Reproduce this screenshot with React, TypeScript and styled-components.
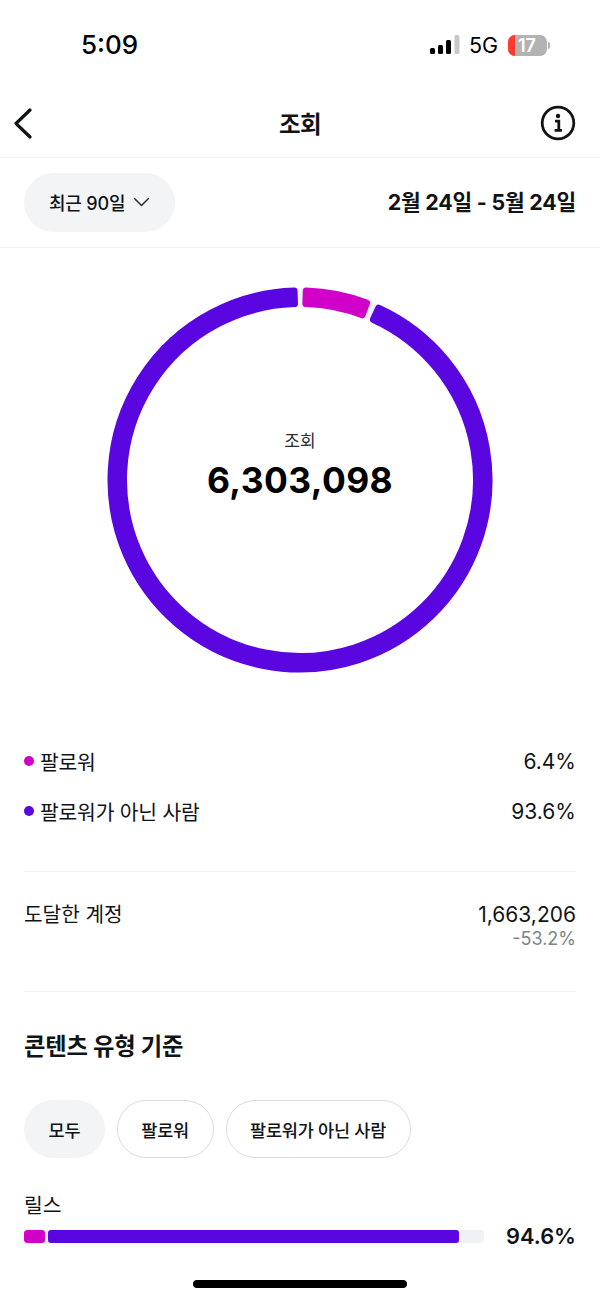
import styled, { createGlobalStyle } from "styled-components";

const PURPLE = "#5a06e0";
const MAGENTA = "#d000c8";
const SANS = `Inter, "Noto Sans CJK KR", "Liberation Sans", sans-serif`;

const GlobalStyle = createGlobalStyle`
  html, body {
    margin: 0;
    padding: 0;
    background: #ffffff;
  }
  body {
    font-family: ${SANS};
    color: #111316;
  }
`;

const Page = styled.div`
  position: relative;
  width: 600px;
  height: 1301px;
  overflow: hidden;
  background: #ffffff;
`;

// status bar
const StatusBar = styled.div`
  height: 90px;
  display: flex;
  align-items: flex-start;
  justify-content: space-between;
  padding: 29px 50px 0 81px;
  box-sizing: border-box;
`;

const Clock = styled.div`
  font-size: 26px;
  line-height: 32px;
  font-weight: 500;
  color: #000;
`;

const StatusIcons = styled.div`
  display: flex;
  align-items: center;
  gap: 9px;
  height: 32px;
`;

const Network = styled.span`
  font-size: 21.5px;
  font-weight: 400;
  color: #000;
`;

const Battery = styled.div`
  position: relative;
  width: 29px;
  height: 21px;
  margin-left: 1px;
  padding-left: 10px;
  border-radius: 7px;
  background: #b3b3b3;
  color: #fff;
  font-size: 18px;
  font-weight: 600;
  line-height: 21px;
  overflow: hidden;
  &::before {
    content: "";
    position: absolute;
    left: 0;
    top: 0;
    bottom: 0;
    width: 7px;
    background: #ff3b30;
  }
`;

const BatteryWrap = styled.div`
  display: flex;
  align-items: center;
  gap: 1px;
`;

const BatteryCap = styled.div`
  width: 2px;
  height: 7px;
  border-radius: 0 2px 2px 0;
  background: #b3b3b3;
`;

// header
const NavBar = styled.div`
  height: 68px;
  display: grid;
  grid-template-columns: 1fr auto 1fr;
  align-items: center;
  padding: 0 24px 2px 12px;
  box-sizing: border-box;
  border-bottom: 1px solid #efefef;
`;

const NavSlot = styled.div<{ $end?: boolean }>`
  display: flex;
  justify-content: ${(p) => (p.$end ? "flex-end" : "flex-start")};
`;

const NavTitle = styled.div`
  font-size: 23.5px;
  font-weight: 700;
  letter-spacing: -0.5px;
  transform: translateX(6px);
`;

const DateRow = styled.div`
  height: 90px;
  display: flex;
  align-items: center;
  justify-content: space-between;
  padding: 0 24px;
  box-sizing: border-box;
  border-bottom: 1px solid #efefef;
`;

const RangeButton = styled.div`
  height: 59px;
  display: flex;
  align-items: center;
  gap: 8px;
  padding: 0 25px;
  margin-top: -1px;
  box-sizing: border-box;
  border-radius: 30px;
  background: #f3f4f6;
  font-size: 18px;
  font-weight: 500;
  letter-spacing: -0.2px;
`;

const DateText = styled.div`
  margin-bottom: 5px;
  font-size: 21.4px;
  font-weight: 700;
  letter-spacing: -0.2px;
`;

// donut
const ChartBox = styled.div`
  position: relative;
  width: 384px;
  height: 384px;
  margin: 40px auto 0;
`;

const Ring = styled.svg`
  display: block;
  overflow: visible;
`;

const ChartCenter = styled.div`
  position: absolute;
  inset: 0;
  display: flex;
  flex-direction: column;
  align-items: center;
  justify-content: center;
`;

const ChartLabel = styled.div`
  font-size: 17px;
  line-height: 24px;
  color: #2a2c30;
`;

const ChartValue = styled.div`
  margin: 5px 0 27px;
  font-size: 35.4px;
  line-height: 46px;
  font-weight: 700;
  letter-spacing: 0.4px;
  color: #000;
`;

// legend + metrics
const Section = styled.div`
  padding: 0 24px;
`;

const Legend = styled.div`
  display: flex;
  flex-direction: column;
  gap: 20px;
  margin-top: 74px;
  padding-bottom: 45px;
  border-bottom: 1px solid #f1f1f3;
`;

const Row = styled.div`
  display: flex;
  align-items: center;
  justify-content: space-between;
  height: 30px;
  font-size: 21px;
`;

const RowLabel = styled.div`
  display: flex;
  align-items: center;
  gap: 6px;
  font-size: 20.4px;
  letter-spacing: -0.2px;
`;

const Dot = styled.span<{ color: string }>`
  width: 10px;
  height: 10px;
  border-radius: 50%;
  background: ${(p) => p.color};
`;

const Reach = styled.div`
  display: flex;
  justify-content: space-between;
  height: 120px;
  padding-top: 29px;
  box-sizing: border-box;
  border-bottom: 1px solid #f1f1f3;
  font-size: 21px;
  line-height: 28px;
`;

const ReachLabel = styled.span`
  font-size: 20.2px;
`;

const ReachValue = styled.div`
  text-align: right;
`;

const ReachDelta = styled.div`
  font-size: 18px;
  line-height: 20px;
  color: #7f838a;
`;

const Heading = styled.h2`
  margin: 37px 0 0;
  font-size: 23.3px;
  line-height: 36px;
  font-weight: 700;
  letter-spacing: -0.2px;
`;

const Chips = styled.div`
  display: flex;
  gap: 12px;
  margin-top: 35px;
`;

const Chip = styled.div<{ $active?: boolean }>`
  height: 58px;
  display: flex;
  align-items: center;
  padding: 0 ${(p) => (p.$active ? "24.5px" : "23.5px")};
  box-sizing: border-box;
  border-radius: 30px;
  font-size: 17.5px;
  font-weight: 500;
  letter-spacing: -0.2px;
  background: ${(p) => (p.$active ? "#f3f4f6" : "#fff")};
  border: ${(p) => (p.$active ? "none" : "1.5px solid #dcdcdc")};
`;

const BarLabel = styled.div`
  margin-top: 34px;
  font-size: 20.4px;
  line-height: 28px;
`;

const BarRow = styled.div`
  display: flex;
  align-items: center;
  justify-content: space-between;
  margin-top: 2px;
`;

const BarTrack = styled.div`
  width: 460px;
  height: 13px;
  display: flex;
  gap: 3px;
  border-radius: 3px;
  background: #f0f1f5;
  overflow: hidden;
`;

const BarPart = styled.div<{ color: string; $width: number }>`
  width: ${(p) => p.$width}px;
  height: 100%;
  border-radius: 3px;
  background: ${(p) => p.color};
`;

const BarValue = styled.div`
  font-size: 21.8px;
  line-height: 28px;
  font-weight: 600;
`;

const HomeIndicator = styled.div`
  position: absolute;
  left: 193px;
  bottom: 13px;
  width: 214px;
  height: 8px;
  border-radius: 4px;
  background: #000;
`;

const point = (r: number, deg: number) => {
  const a = (deg * Math.PI) / 180;
  return `${(192 + r * Math.sin(a)).toFixed(2)} ${(192 - r * Math.cos(a)).toFixed(2)}`;
};

// ring segment with rounded corners: the fill is inset and a round-joined stroke grows it back
const sector = (from: number, to: number) => {
  const large = to - from > 180 ? 1 : 0;
  const rOut = 189;
  const rIn = 176.5;
  return [
    `M ${point(rOut, from)}`,
    `A ${rOut} ${rOut} 0 ${large} 1 ${point(rOut, to)}`,
    `L ${point(rIn, to)}`,
    `A ${rIn} ${rIn} 0 ${large} 0 ${point(rIn, from)}`,
    "Z",
  ].join(" ");
};

const Donut = () => (
  <Ring width="384" height="384" viewBox="0 0 384 384">
    <circle cx="192" cy="192" r="183" fill="none" stroke="#f1eff8" strokeWidth="17" />
    <path d={sector(24.6, 358.2)} fill={PURPLE} stroke={PURPLE} strokeWidth="7" strokeLinejoin="round" />
    <path d={sector(1.9, 20.6)} fill={MAGENTA} stroke={MAGENTA} strokeWidth="7" strokeLinejoin="round" />
  </Ring>
);

const App = () => (
  <Page>
    <GlobalStyle />
    <StatusBar>
      <Clock>5:09</Clock>
      <StatusIcons>
        <svg width="30" height="20" viewBox="0 0 30 20">
          <rect x="0" y="13" width="5" height="6" rx="1.5" fill="#000" />
          <rect x="8" y="10" width="5" height="9" rx="1.5" fill="#000" />
          <rect x="16" y="5" width="5" height="14" rx="1.5" fill="#000" />
          <rect x="24.5" y="0" width="5" height="19" rx="1.5" fill="#c9c9c9" />
        </svg>
        <Network>5G</Network>
        <BatteryWrap>
          <Battery>17</Battery>
          <BatteryCap />
        </BatteryWrap>
      </StatusIcons>
    </StatusBar>

    <NavBar>
      <NavSlot>
        <svg width="22" height="32" viewBox="0 0 22 32" fill="none">
          <path d="M18 3 L4 16.5 L18 30" stroke="#111316" strokeWidth="3.2" strokeLinecap="round" strokeLinejoin="round" />
        </svg>
      </NavSlot>
      <NavTitle>조회</NavTitle>
      <NavSlot $end>
        <svg width="36" height="36" viewBox="0 0 36 36" fill="none">
          <circle cx="18" cy="18" r="15.8" stroke="#111316" strokeWidth="2.8" />
          <circle cx="18" cy="11" r="2.2" fill="#111316" />
          <path d="M15 16.2 H18.8 V25 M14.6 25.4 H22" stroke="#111316" strokeWidth="2.8" />
        </svg>
      </NavSlot>
    </NavBar>

    <DateRow>
      <RangeButton>
        최근 90일
        <svg width="17" height="10" viewBox="0 0 17 10" fill="none">
          <path d="M1.5 1.5 L8.5 8.5 L15.5 1.5" stroke="#2a2c30" strokeWidth="1.5" strokeLinecap="round" strokeLinejoin="round" />
        </svg>
      </RangeButton>
      <DateText>2월 24일 - 5월 24일</DateText>
    </DateRow>

    <ChartBox>
      <Donut />
      <ChartCenter>
        <ChartLabel>조회</ChartLabel>
        <ChartValue>6,303,098</ChartValue>
      </ChartCenter>
    </ChartBox>

    <Section>
      <Legend>
        <Row>
          <RowLabel>
            <Dot color={MAGENTA} />
            팔로워
          </RowLabel>
          <span>6.4%</span>
        </Row>
        <Row>
          <RowLabel>
            <Dot color={PURPLE} />
            팔로워가 아닌 사람
          </RowLabel>
          <span>93.6%</span>
        </Row>
      </Legend>

      <Reach>
        <ReachLabel>도달한 계정</ReachLabel>
        <ReachValue>
          1,663,206
          <ReachDelta>-53.2%</ReachDelta>
        </ReachValue>
      </Reach>

      <Heading>콘텐츠 유형 기준</Heading>

      <Chips>
        <Chip $active>모두</Chip>
        <Chip>팔로워</Chip>
        <Chip>팔로워가 아닌 사람</Chip>
      </Chips>

      <BarLabel>릴스</BarLabel>
      <BarRow>
        <BarTrack>
          <BarPart color={MAGENTA} $width={21} />
          <BarPart color={PURPLE} $width={411} />
        </BarTrack>
        <BarValue>94.6%</BarValue>
      </BarRow>
    </Section>

    <HomeIndicator />
  </Page>
);

export default App;
